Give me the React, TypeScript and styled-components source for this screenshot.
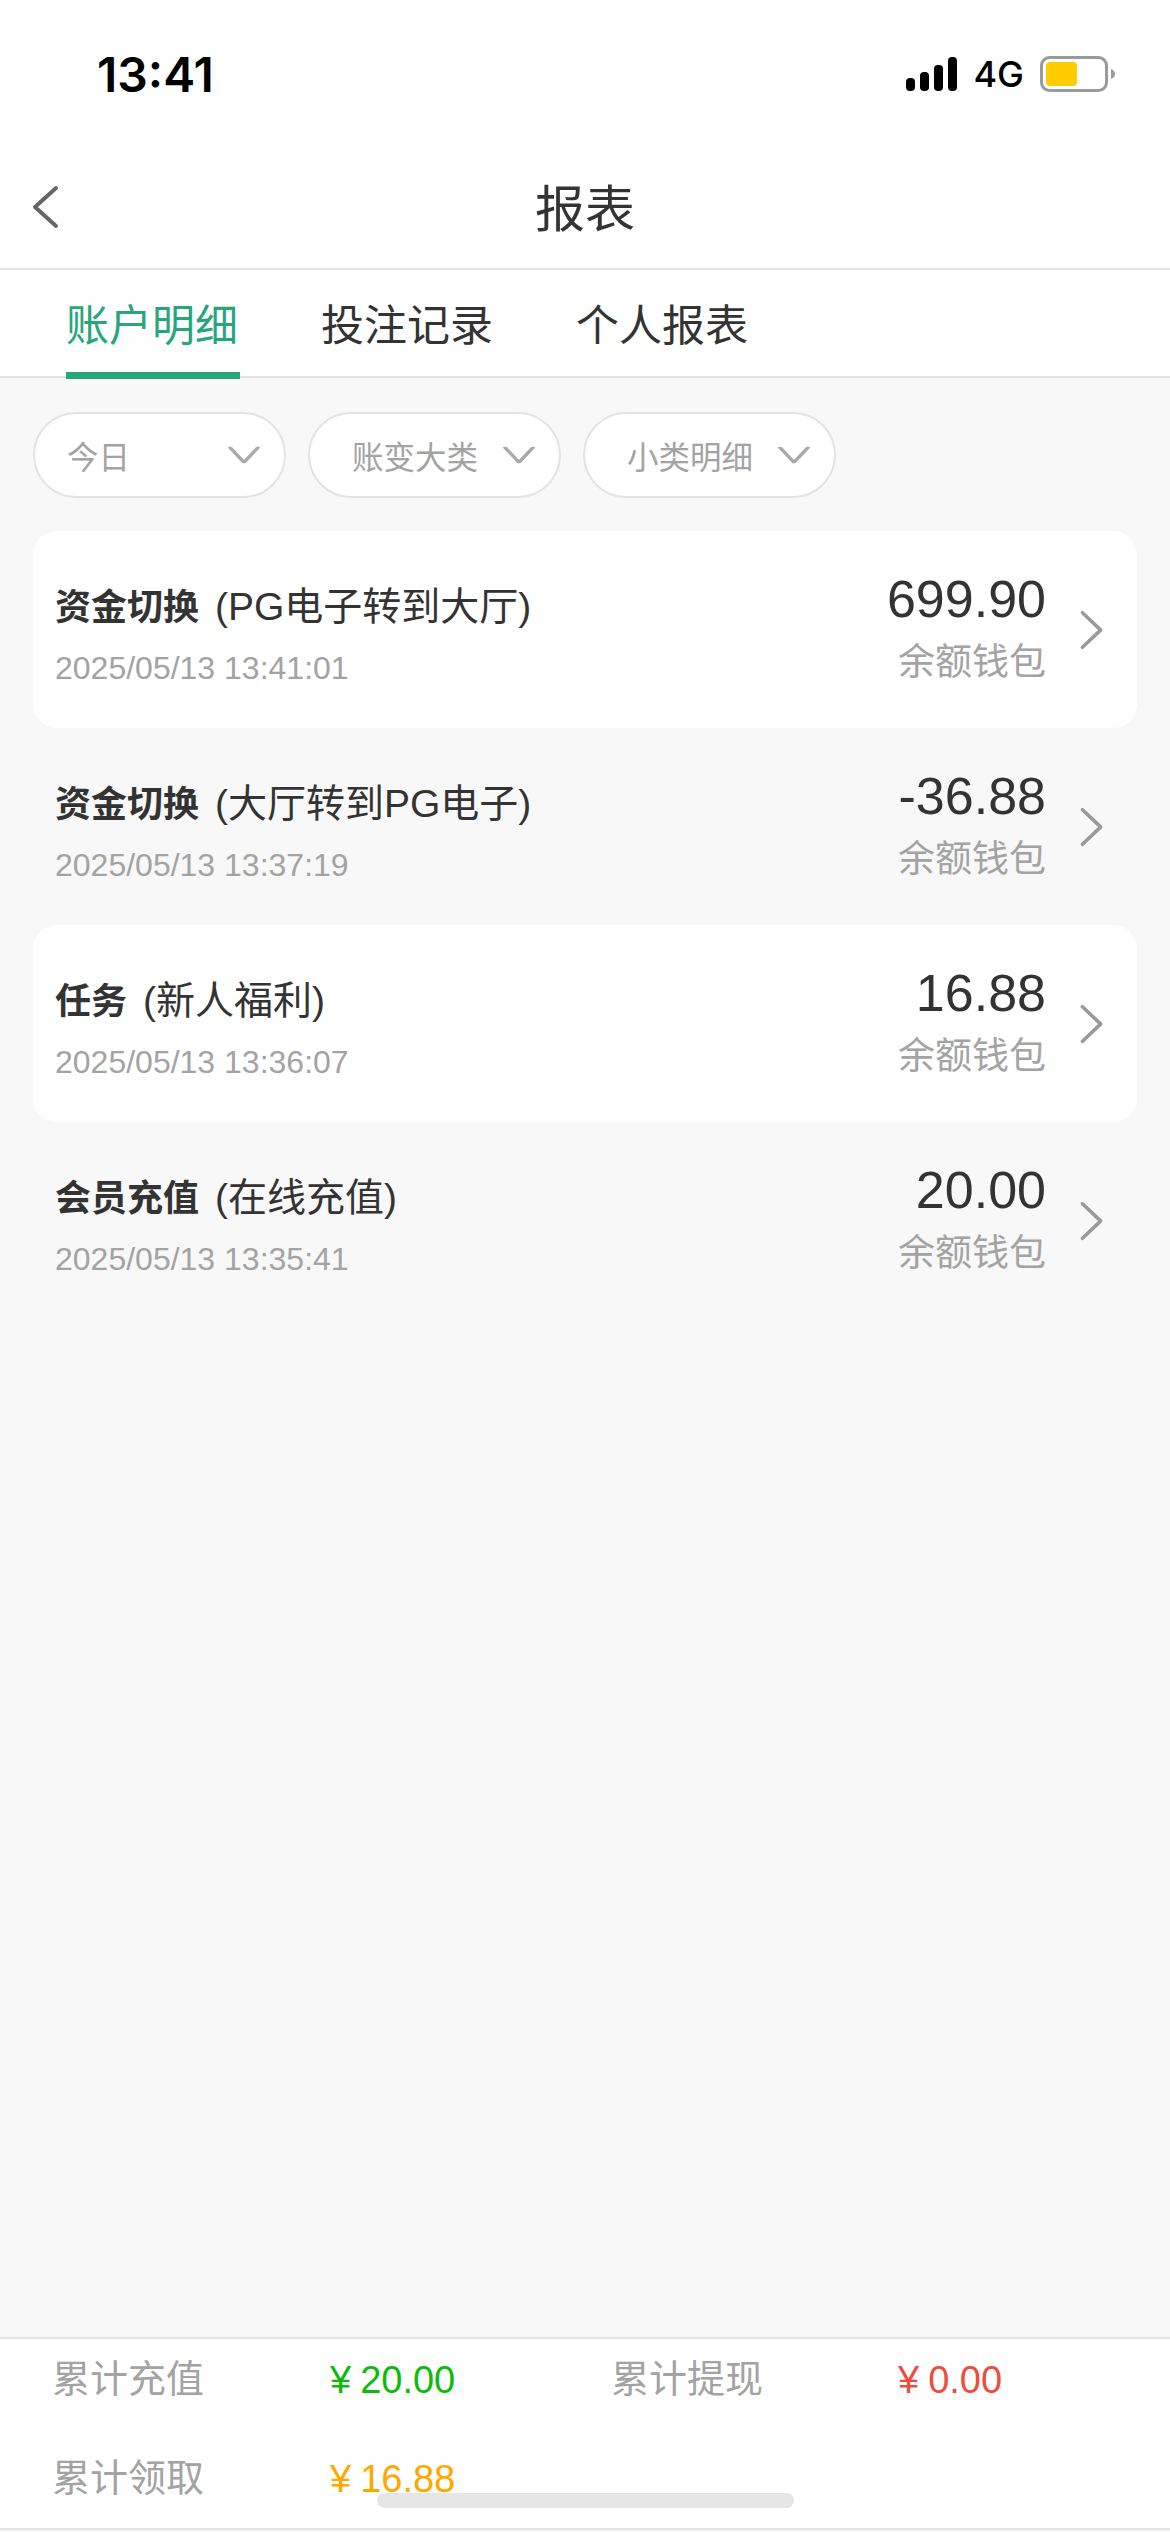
import React from "react";
import styled, { createGlobalStyle } from "styled-components";

const latin = `"Liberation Sans", "Noto Sans CJK SC", sans-serif`;

const GlobalStyle = createGlobalStyle`
  html, body {
    margin: 0;
    padding: 0;
    background: #f8f8f8;
  }
  * {
    box-sizing: border-box;
  }
`;

const Page = styled.div`
  position: relative;
  width: 1170px;
  height: 2532px;
  display: flex;
  flex-direction: column;
  overflow: hidden;
  background: #f8f8f8;
  font-family: ${latin};
`;

const StatusBar = styled.div`
  height: 148px;
  flex: none;
  display: flex;
  align-items: center;
  justify-content: space-between;
  padding: 0 55px 0 97px;
  background: #fff;
`;

const Clock = styled.span`
  font-family: Inter, sans-serif;
  font-size: 48px;
  font-weight: 600;
  color: #000;
`;

const StatusIcons = styled.div`
  display: flex;
  align-items: center;
  gap: 16px;
`;

const Network = styled.span`
  font-family: Inter, sans-serif;
  font-size: 36px;
  font-weight: 500;
  color: #000;
`;

const NavBar = styled.div`
  position: relative;
  height: 122px;
  flex: none;
  display: flex;
  align-items: center;
  justify-content: center;
  padding-bottom: 6px;
  background: #fff;
  border-bottom: 2px solid #e3e3e3;
`;

const BackButton = styled.svg`
  position: absolute;
  left: 30px;
  top: 37px;
  width: 30px;
  height: 44px;
`;

const Title = styled.h1`
  margin: 0;
  font-size: 50px;
  font-weight: 400;
  color: #333;
`;

const Tabs = styled.div`
  height: 108px;
  flex: none;
  display: flex;
  gap: 81px;
  padding-left: 66px;
  background: #fff;
  border-bottom: 2px solid #e3e3e3;
`;

const Tab = styled.div<{ $active?: boolean }>`
  position: relative;
  width: 174px;
  height: 106px;
  line-height: 112px;
  font-size: 43px;
  white-space: nowrap;
  color: ${(p) => (p.$active ? "#27a67c" : "#333")};

  &::after {
    content: "";
    display: ${(p) => (p.$active ? "block" : "none")};
    position: absolute;
    left: 0;
    bottom: -3px;
    width: 174px;
    height: 7px;
    background: #27a67c;
  }
`;

const Filters = styled.div`
  display: flex;
  gap: 22px;
  padding: 34px 33px 33px;
`;

const Pill = styled.div<{ $inset: number }>`
  width: 253px;
  height: 86px;
  display: flex;
  align-items: center;
  justify-content: space-between;
  padding: 0 24px 0 ${(p) => p.$inset}px;
  background: #fff;
  border: 2px solid #e3e3e3;
  border-radius: 43px;
  font-size: 31.5px;
  color: #a3a3a3;
`;

const PillArrow = styled.svg`
  width: 32px;
  height: 18px;
  flex: none;
`;

const List = styled.div`
  display: flex;
  flex-direction: column;
  padding: 0 33px;
`;

const Row = styled.div<{ $card?: boolean }>`
  height: 197px;
  display: flex;
  align-items: center;
  justify-content: space-between;
  padding: 0 33px 0 22px;
  border-radius: 24px;
  background: ${(p) => (p.$card ? "#fff" : "transparent")};
`;

const RowMain = styled.div`
  display: flex;
  flex-direction: column;
  gap: 15px;
  padding-top: 10px;
`;

const RowTitle = styled.div`
  font-size: 36px;
  line-height: 50px;
  color: #333;
  white-space: nowrap;

  b {
    font-weight: 700;
  }

  span {
    margin-left: 16px;
    font-size: 39px;
  }
`;

const RowDate = styled.div`
  font-size: 32px;
  line-height: 40px;
  color: #a3a3a3;
`;

const RowRight = styled.div`
  display: flex;
  align-items: center;
  gap: 33px;
`;

const Amounts = styled.div`
  display: flex;
  flex-direction: column;
  align-items: flex-end;
`;

const Amount = styled.div`
  font-size: 52px;
  line-height: 60px;
  color: #333;
`;

const Wallet = styled.div`
  margin-top: 6px;
  font-size: 37px;
  line-height: 56px;
  color: #a3a3a3;
`;

const RowArrow = styled.svg`
  width: 25px;
  height: 40px;
  flex: none;
`;

const Footer = styled.div`
  margin-top: auto;
  margin-bottom: 2px;
  height: 193px;
  flex: none;
  display: grid;
  grid-template-columns: 278px 281px 287px 1fr;
  grid-template-rows: 60px 60px;
  row-gap: 39px;
  align-content: start;
  align-items: center;
  padding: 6px 0 0 52px;
  background: #fff;
  border-top: 2px solid #e3e3e3;
  border-bottom: 2px solid #e3e3e3;
`;

const FooterLabel = styled.span`
  font-size: 38px;
  color: #a3a3a3;
  white-space: nowrap;
`;

const FooterValue = styled.span<{ $color: string }>`
  padding-top: 10px;
  font-size: 38px;
  color: ${(p) => p.$color};
  white-space: nowrap;

  i {
    font-style: normal;
    margin-right: 9px;
  }
`;

const HomeBar = styled.div`
  position: absolute;
  left: 377px;
  top: 2493px;
  width: 417px;
  height: 15px;
  border-radius: 8px;
  background: #e6e6e6;
`;

const Chevron = ({ as: Comp, d, color }: { as: typeof PillArrow; d: string; color: string }) => (
  <Comp viewBox="0 0 30 44" fill="none" preserveAspectRatio="none">
    <path d={d} stroke={color} strokeWidth="4" strokeLinecap="round" strokeLinejoin="round" />
  </Comp>
);

const filters = [
  { label: "今日", inset: 32 },
  { label: "账变大类", inset: 42 },
  { label: "小类明细", inset: 42 },
];

const rows = [
  { bold: "资金切换", sub: "(PG电子转到大厅)", date: "2025/05/13 13:41:01", amount: "699.90", card: true },
  { bold: "资金切换", sub: "(大厅转到PG电子)", date: "2025/05/13 13:37:19", amount: "-36.88" },
  { bold: "任务", sub: "(新人福利)", date: "2025/05/13 13:36:07", amount: "16.88", card: true },
  { bold: "会员充值", sub: "(在线充值)", date: "2025/05/13 13:35:41", amount: "20.00" },
];

export default function App() {
  return (
    <Page>
      <GlobalStyle />
      <StatusBar>
        <Clock>13:41</Clock>
        <StatusIcons>
          <svg width="51" height="34" viewBox="0 0 51 34">
            <rect x="0" y="21" width="9" height="13" rx="4" fill="#000" />
            <rect x="14" y="15" width="9" height="19" rx="4" fill="#000" />
            <rect x="28" y="8" width="9" height="26" rx="4" fill="#000" />
            <rect x="42" y="0" width="9" height="34" rx="4" fill="#000" />
          </svg>
          <Network>4G</Network>
          <svg width="75" height="36" viewBox="0 0 75 36">
            <rect x="1.5" y="1.5" width="65" height="33" rx="8" fill="#fff" stroke="#9a9a9a" strokeWidth="3" />
            <rect x="6" y="6" width="31" height="24" rx="4" fill="#ffcc00" />
            <path d="M71 13 C74 14 75 16 75 18 C75 20 74 22 71 23 Z" fill="#9a9a9a" />
          </svg>
        </StatusIcons>
      </StatusBar>

      <NavBar>
        <BackButton viewBox="0 0 30 44" fill="none">
          <path d="M26 3 L5 22 L26 41" stroke="#666" strokeWidth="4" strokeLinecap="round" strokeLinejoin="round" />
        </BackButton>
        <Title>报表</Title>
      </NavBar>

      <Tabs>
        <Tab $active>账户明细</Tab>
        <Tab>投注记录</Tab>
        <Tab>个人报表</Tab>
      </Tabs>

      <Filters>
        {filters.map((f) => (
          <Pill key={f.label} $inset={f.inset}>
            <span>{f.label}</span>
            <Chevron as={PillArrow} d="M2 4 L15 40 L28 4" color="#aaa" />
          </Pill>
        ))}
      </Filters>

      <List>
        {rows.map((row) => (
          <Row key={row.date} $card={row.card}>
            <RowMain>
              <RowTitle>
                <b>{row.bold}</b>
                <span>{row.sub}</span>
              </RowTitle>
              <RowDate>{row.date}</RowDate>
            </RowMain>
            <RowRight>
              <Amounts>
                <Amount>{row.amount}</Amount>
                <Wallet>余额钱包</Wallet>
              </Amounts>
              <Chevron as={RowArrow} d="M4 3 L26 22 L4 41" color="#999" />
            </RowRight>
          </Row>
        ))}
      </List>

      <Footer>
        <FooterLabel>累计充值</FooterLabel>
        <FooterValue $color="#0dbb0d"><i>¥</i>20.00</FooterValue>
        <FooterLabel>累计提现</FooterLabel>
        <FooterValue $color="#f04c3e"><i>¥</i>0.00</FooterValue>
        <FooterLabel>累计领取</FooterLabel>
        <FooterValue $color="#ffa800"><i>¥</i>16.88</FooterValue>
      </Footer>
      <HomeBar />
    </Page>
  );
}
